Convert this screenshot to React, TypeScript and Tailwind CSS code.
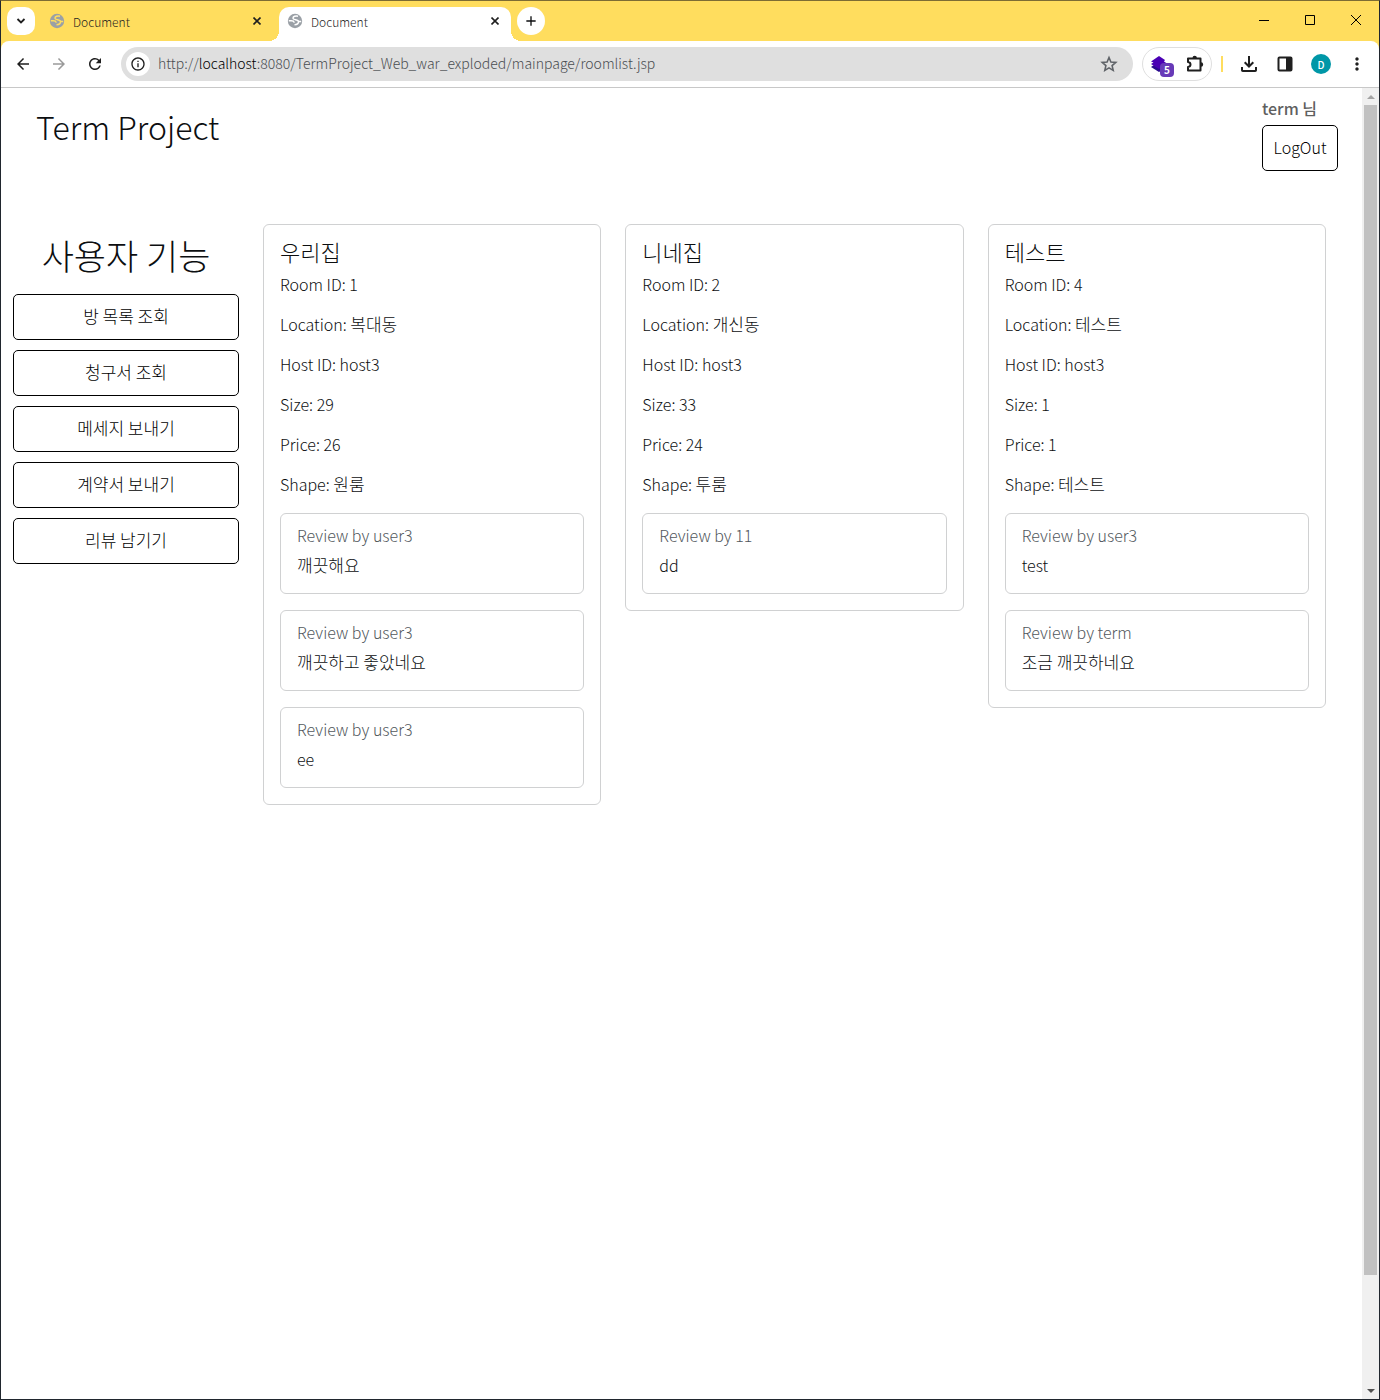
import React from "react";
import {
  MdAdd,
  MdArrowBack,
  MdArrowForward,
  MdInfoOutline,
  MdMoreVert,
  MdRefresh,
} from "react-icons/md";

type Review = { author: string; text: string };
type Room = {
  id: number;
  name: string;
  location: string;
  host: string;
  size: number;
  price: number;
  shape: string;
  reviews: Review[];
};

const rooms: Room[] = [
  {
    id: 1,
    name: "우리집",
    location: "복대동",
    host: "host3",
    size: 29,
    price: 26,
    shape: "원룸",
    reviews: [
      { author: "user3", text: "깨끗해요" },
      { author: "user3", text: "깨끗하고 좋았네요" },
      { author: "user3", text: "ee" },
    ],
  },
  {
    id: 2,
    name: "니네집",
    location: "개신동",
    host: "host3",
    size: 33,
    price: 24,
    shape: "투룸",
    reviews: [{ author: "11", text: "dd" }],
  },
  {
    id: 4,
    name: "테스트",
    location: "테스트",
    host: "host3",
    size: 1,
    price: 1,
    shape: "테스트",
    reviews: [
      { author: "user3", text: "test" },
      { author: "term", text: "조금 깨끗하네요" },
    ],
  },
];

const menu = ["방 목록 조회", "청구서 조회", "메세지 보내기", "계약서 보내기", "리뷰 남기기"];

function GlobeIcon() {
  return (
    <svg width="16" height="16" viewBox="0 0 16 16" className="-mt-0.5">
      <circle cx="8" cy="8" r="7.200" fill="#9aa0a6" />
      <path
        d="M11 3.200C8.500 2.600 6 3.400 6 5.200c0 2 5.500 1.200 5.500 3.600 0 1.900-1.600 2.900-4 2.900"
        fill="none"
        stroke="currentColor"
        strokeWidth="1.500"
      />
      <path d="M1.800 7.800h2.500c1.500 0 2.700.6 3 1.800M11.500 8.500h2.700" fill="none" stroke="currentColor" strokeWidth="1.500" />
    </svg>
  );
}

function Tab({ active }: { active?: boolean }) {
  return (
    <div
      className={
        active
          ? "relative flex h-[34px] w-[232px] items-center rounded-t-[10px] bg-white px-2 pb-1"
          : "flex h-[34px] w-[232px] items-center px-2 pb-1"
      }
    >
      {active && (
        <>
          <span className="absolute bottom-0 -left-2.5 size-2.5 bg-[radial-gradient(circle_at_0_0,#ffdd5e_10px,#fff_10px)]" />
          <span className="absolute bottom-0 -right-2.5 size-2.5 bg-[radial-gradient(circle_at_100%_0,#ffdd5e_10px,#fff_10px)]" />
        </>
      )}
      <span className={active ? "text-white" : "text-[#ffdd5e]"}>
        <GlobeIcon />
      </span>
      <span className="ml-2 flex-1 text-xs text-[#1f1f1f]">Document</span>
      <button aria-label="Close tab" className="flex size-4 items-center justify-center pb-0.5">
        <svg width="8" height="8" viewBox="0 0 8 8" stroke="#1f1f1f" strokeWidth="1.600">
          <path d="M.5.5l7 7M7.500.5l-7 7" />
        </svg>
      </button>
    </div>
  );
}

function TabStrip() {
  return (
    <div className="flex h-10 items-end bg-[#ffdd5e]">
      <button
        aria-label="Search tabs"
        className="mb-[6px] ml-[6px] flex size-7 items-center justify-center rounded-[10px] bg-white"
      >
        <svg width="10" height="6" viewBox="0 0 10 6" fill="none" stroke="#1f1f1f" strokeWidth="1.800">
          <path d="M1.500 1L5 4.500 8.500 1" />
        </svg>
      </button>
      <div className="ml-[6px] flex gap-[6px]">
        <Tab />
        <Tab active />
      </div>
      <button
        aria-label="New tab"
        className="mb-[6px] ml-[6px] flex size-7 items-center justify-center rounded-full bg-white"
      >
        <MdAdd className="size-4" />
      </button>
      <div className="ml-auto flex h-full items-center pb-0.5">
        <button aria-label="Minimize" className="flex h-full w-[46px] items-center justify-center">
          <svg width="10" height="10" viewBox="0 0 10 10" stroke="#000" fill="none">
            <path d="M0 5.500h10" />
          </svg>
        </button>
        <button aria-label="Maximize" className="flex h-full w-[46px] items-center justify-center">
          <svg width="10" height="10" viewBox="0 0 10 10" stroke="#000" fill="none">
            <path d="M.5.5h9v9h-9z" />
          </svg>
        </button>
        <button aria-label="Close" className="flex h-full w-[46px] items-center justify-center">
          <svg width="10" height="10" viewBox="0 0 10 10" stroke="#000" fill="none">
            <path d="M0 0l10 10M10 0L0 10" />
          </svg>
        </button>
      </div>
    </div>
  );
}

function Toolbar() {
  return (
    <div className="bg-[#ffdd5e]">
      <div className="flex h-[47px] items-center rounded-t-lg border-b border-[#c8c8c8] bg-white pr-3 pl-[13px] text-[#1f1f1f]">
        <button aria-label="Back">
          <MdArrowBack className="size-[18px]" />
        </button>
        <button aria-label="Forward" className="ml-[18px] text-[#9a9a9a]">
          <MdArrowForward className="size-[18px]" />
        </button>
        <button aria-label="Reload" className="ml-[18px]">
          <MdRefresh className="size-[18px]" />
        </button>
        <div className="ml-[17px] flex h-[34px] flex-1 items-center rounded-full bg-[#dfdfdf] pr-[15px] pl-[5px]">
          <button aria-label="Site information" className="flex size-6 items-center justify-center rounded-full bg-white">
            <MdInfoOutline className="size-4" />
          </button>
          <div className="ml-2 flex-1 pb-0.5 text-sm text-[#4a4d51]">
            http://<span className="text-black">localhost</span>
            :8080/TermProject_Web_war_exploded/mainpage/roomlist.jsp
          </div>
          <button aria-label="Bookmark">
            <svg width="18" height="18" viewBox="0 0 18 18" fill="none" stroke="#5f6368" strokeWidth="1.600">
              <path d="M9 2.500l1.900 4.500 4.900.4-3.700 3.200 1.100 4.800L9 12.900l-4.200 2.500 1.100-4.800L2.200 7.400 7.100 7z" />
            </svg>
          </button>
        </div>
        <div className="ml-[9px] flex h-[34px] w-[70px] items-center justify-between rounded-full border border-[#dfdfdf] px-[7px]">
          <button aria-label="Extension" className="relative">
            <svg width="18" height="18" viewBox="0 0 18 18">
              <path d="M1 12l3-2h10l3 2-8 5z" fill="#2a0a8f" />
              <path d="M1 6.500L9 1l6 4-1 1.500 3 2-8 5.500-8-5 2.500-1.500z" fill="#4a00b4" />
            </svg>
            <span className="absolute -right-1.5 -bottom-1 flex size-[14px] items-center justify-center rounded bg-[#673ab7] text-[10px] leading-none font-bold text-white">
              5
            </span>
          </button>
          <button aria-label="Extensions">
            <svg width="18" height="18" viewBox="0 0 18 18">
              <path
                d="M2 3.500h12.500V15.500H2V12c1.600-.2 2.500-1.200 2.500-2.500S3.600 7.200 2 7z"
                fill="none"
                stroke="currentColor"
                strokeWidth="2"
                strokeLinejoin="round"
              />
              <path d="M6.500 3a2.200 2.200 0 0 1 4.400 0zM15 7.300a2.200 2.200 0 0 1 0 4.400z" fill="currentColor" />
            </svg>
          </button>
        </div>
        <span className="ml-[9px] h-4 w-0.5 bg-[#ffdd5e]" />
        <button aria-label="Downloads" className="ml-[17px]">
          <svg width="18" height="18" viewBox="0 0 18 18" fill="none" stroke="currentColor" strokeWidth="2">
            <path d="M9 1v10M4.700 7.200L9 11.500l4.300-4.300M2 12v3.200c0 .5.300.8.8.8h12.400c.5 0 .8-.3.8-.8V12" />
          </svg>
        </button>
        <button aria-label="Side panel" className="ml-[19px]">
          <svg width="16" height="16" viewBox="0 0 16 16">
            <rect x="1.500" y="1.500" width="13" height="13" rx="1" fill="none" stroke="currentColor" strokeWidth="2" />
            <path d="M9 2h5v12H9z" fill="currentColor" />
          </svg>
        </button>
        <button
          aria-label="Profile"
          className="ml-[18px] flex size-5 items-center justify-center rounded-full bg-[#0097a7] text-[10px] font-medium text-white"
        >
          D
        </button>
        <button aria-label="Menu" className="ml-4">
          <MdMoreVert className="size-5" />
        </button>
      </div>
    </div>
  );
}

function Field({ label, value }: { label: string; value: string | number }) {
  const hangul = /[가-힣]/.test(String(value));
  return (
    <p className="leading-6">
      {label}: <span className={hangul ? "text-[17px] leading-none" : ""}>{value}</span>
    </p>
  );
}

function ReviewCard({ review }: { review: Review }) {
  const hangul = /[가-힣]/.test(review.text);
  return (
    <article className="rounded-md border border-[#d0d1d2] px-4 pt-3 pb-4">
      <h3 className="mb-2 text-base leading-[19px] text-[#51575c]">Review by {review.author}</h3>
      <p className={hangul ? "text-[17px] leading-6" : "text-base leading-6"}>{review.text}</p>
    </article>
  );
}

function RoomCard({ room }: { room: Room }) {
  return (
    <article className="rounded-md border border-[#d0d1d2] px-4 pt-[14px] pb-4">
      <h2 className="mb-[9px] text-[22px] leading-6">{room.name}</h2>
      <div className="flex flex-col gap-4 text-base">
        <Field label="Room ID" value={room.id} />
        <Field label="Location" value={room.location} />
        <Field label="Host ID" value={room.host} />
        <Field label="Size" value={room.size} />
        <Field label="Price" value={room.price} />
        <Field label="Shape" value={room.shape} />
      </div>
      <div className="mt-[17px] flex flex-col gap-4">
        {room.reviews.map((review, i) => (
          <ReviewCard key={i} review={review} />
        ))}
      </div>
    </article>
  );
}

function Scrollbar() {
  return (
    <div className="flex w-[17px] flex-col bg-[#f0f0f0]">
      <div className="flex h-[17px] items-center justify-center">
        <svg width="8" height="4" viewBox="0 0 8 4">
          <path d="M0 4l4-4 4 4z" fill="#a3a3a3" />
        </svg>
      </div>
      <div className="flex flex-1 flex-col px-0.5">
        <div className="grow-[1170] basis-0 bg-[#c1c1c1]" />
        <div className="grow-[107] basis-0" />
      </div>
      <div className="flex h-[17px] items-center justify-center">
        <svg width="8" height="4" viewBox="0 0 8 4">
          <path d="M0 0h8L4 4z" fill="#505050" />
        </svg>
      </div>
    </div>
  );
}

export default function App() {
  return (
    <div className="flex min-h-screen flex-col border border-[#20262e] border-t-[#7d6c33] bg-white font-['Noto_Sans_CJK_KR',sans-serif] font-light text-[#0c0e10]">
      <TabStrip />
      <Toolbar />
      <div className="flex flex-1">
        <div className="flex-1 pr-6">
          <header className="flex items-start justify-between pt-2 pl-[35px]">
            <h1 className="mt-2.5 text-[32px] leading-10">Term Project</h1>
            <div className="flex w-[76px] flex-col">
              <p className="text-base leading-6 font-medium text-[#5f5f5f]">term 님</p>
              <button className="mt-[5px] h-[46px] rounded-[5px] border border-black pb-0.5 text-base text-black">
                LogOut
              </button>
            </div>
          </header>
          <div className="mt-[53px] flex items-start">
            <nav className="flex w-[250px] flex-col gap-2.5 px-3">
              <h2 className="mt-1.5 mb-1 text-center text-[35px] leading-[50px]">사용자 기능</h2>
              {menu.map((item) => (
                <button key={item} className="h-[46px] rounded-[5px] border border-black pb-0.5 text-[17px] text-black">
                  {item}
                </button>
              ))}
            </nav>
            <main className="grid flex-1 grid-cols-3 items-start gap-6 px-3">
              {rooms.map((room) => (
                <RoomCard key={room.id} room={room} />
              ))}
            </main>
          </div>
        </div>
        <Scrollbar />
      </div>
    </div>
  );
}
